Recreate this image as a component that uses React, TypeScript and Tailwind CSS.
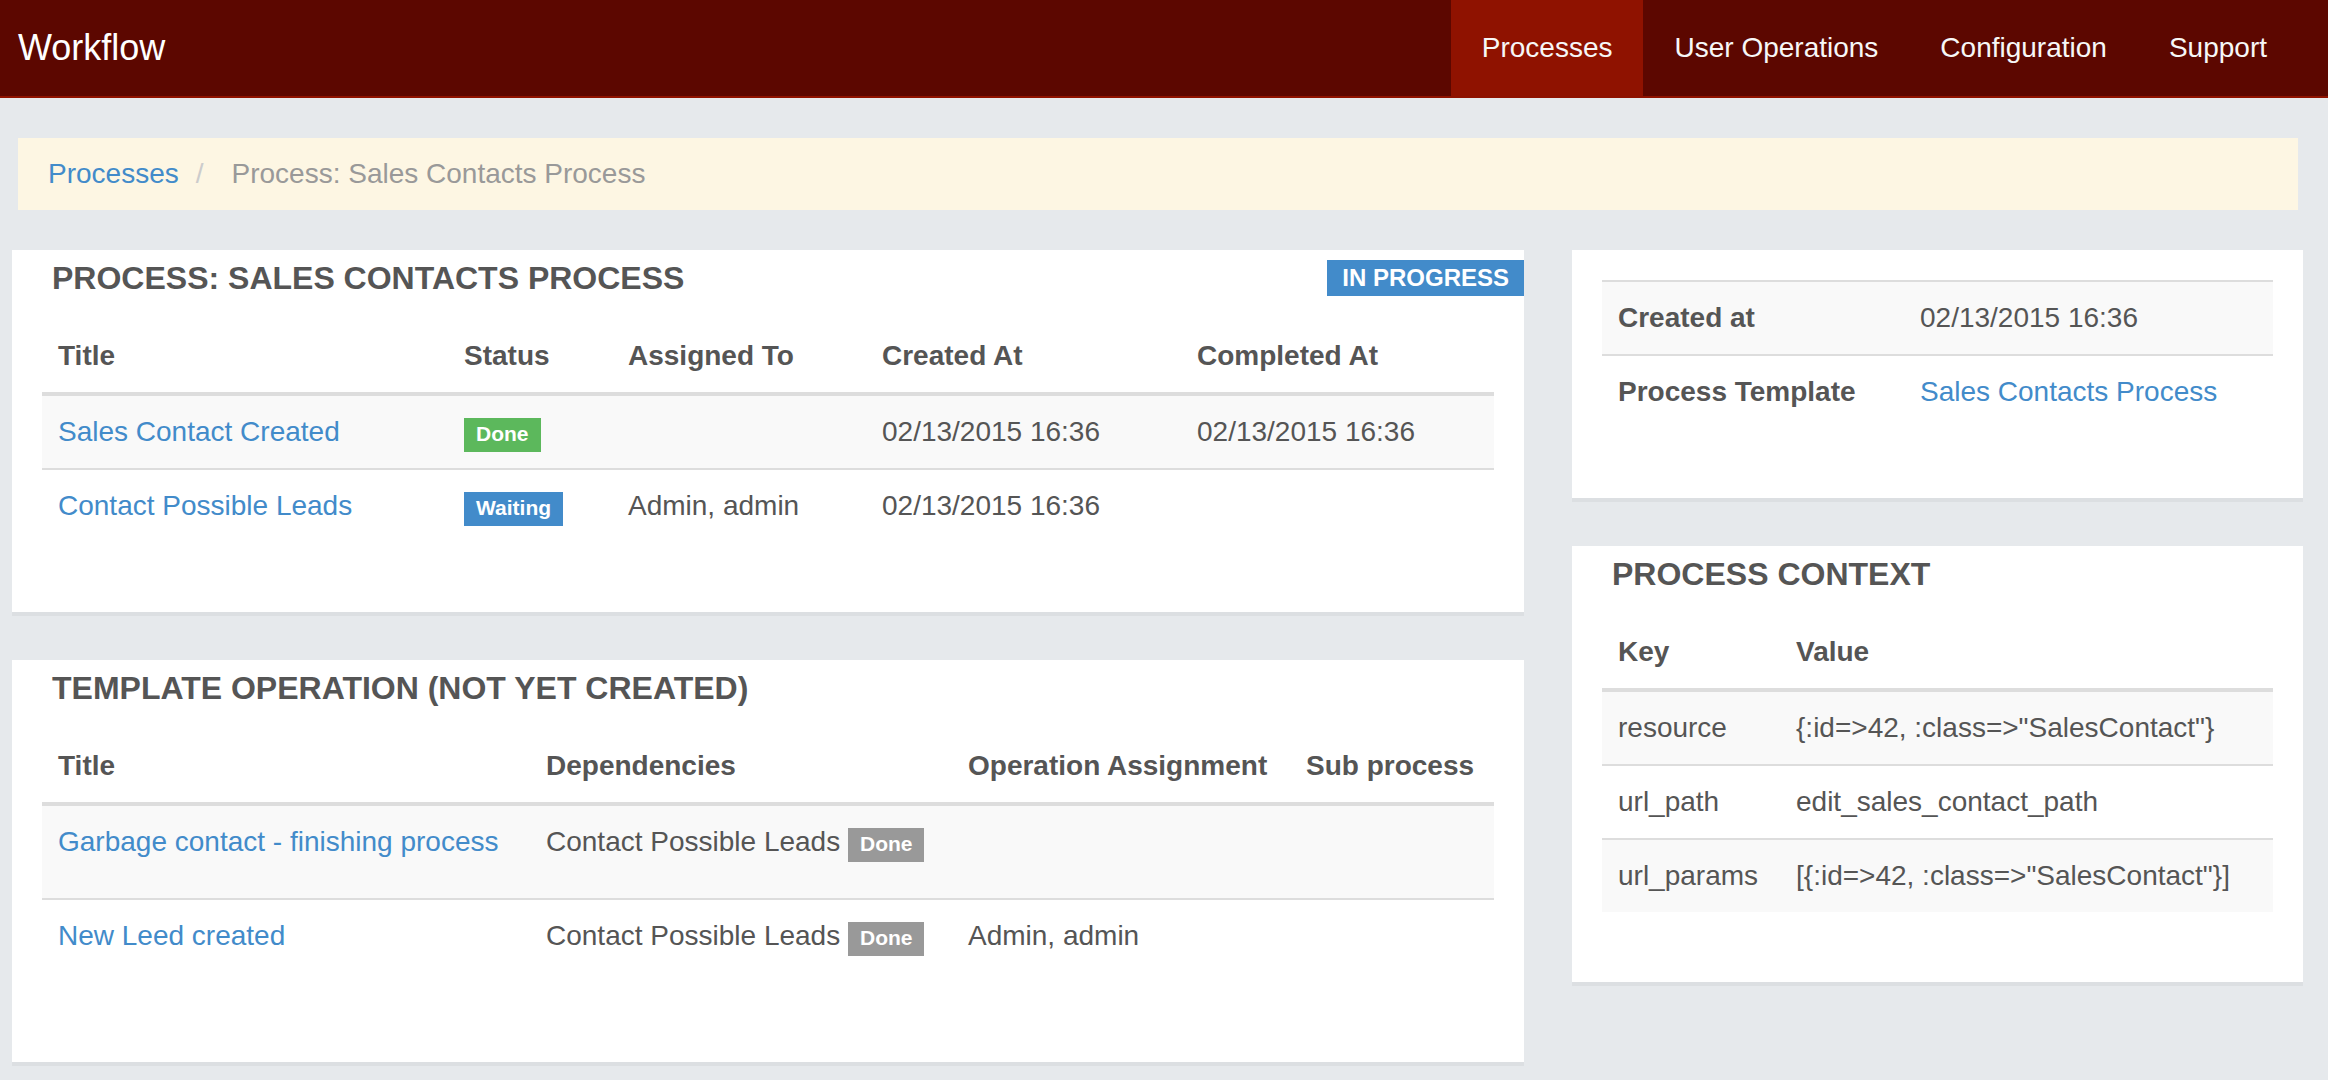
import type { ReactNode } from 'react'

const navItems = ['Processes', 'User Operations', 'Configuration', 'Support']

function Label({ color, children }: { color: string; children: ReactNode }) {
  return (
    <span
      className={`inline-block align-baseline px-[12px] pt-[4px] pb-[6px] text-[21px] leading-[24px] font-bold text-white ${color}`}
    >
      {children}
    </span>
  )
}

function Panel({ title, badge, children }: { title?: string; badge?: string; children: ReactNode }) {
  return (
    <div className={`bg-white border-b-4 border-[#dcdfe2] px-[30px] pb-[70px] mb-[44px] ${title ? 'pt-[10px]' : 'pt-[30px]'}`}>
      {title && (
        <div className="flex justify-between items-start h-[36px] mb-[24px]">
          <h3 className="pl-[10px] text-[32px] leading-[36px] font-bold uppercase text-[#555]">{title}</h3>
          {badge && (
            <span className="-mr-[30px] h-[36px] px-[15px] flex items-center bg-[#428bca] text-white text-[24px] font-bold">
              {badge}
            </span>
          )}
        </div>
      )}
      {children}
    </div>
  )
}

const th = 'text-left font-bold px-[16px] py-[16px] leading-[40px] border-b-4 border-[#ddd] align-bottom'
const td = 'px-[16px] py-[16px] leading-[40px] align-top'
const link = 'text-[#428bca]'

export default function App() {
  return (
    <div className="min-h-screen bg-[#e6e9ec] font-['Liberation_Sans',Arial,sans-serif] text-[28px] text-[#555]">
      {/* navbar */}
      <nav className="h-[98px] bg-[#5c0700] border-b-2 border-[#8f1200] flex items-stretch justify-between">
        <div className="pl-[18px] flex items-center text-[36px] text-white">Workflow</div>
        <ul className="flex pr-[30px]">
          {navItems.map((item, i) => (
            <li
              key={item}
              className={`px-[31px] flex items-center text-[28px] text-[#f7f7f7] ${i === 0 ? 'bg-[#8f1200]' : ''}`}
            >
              {item}
            </li>
          ))}
        </ul>
      </nav>

      {/* breadcrumb */}
      <div className="pt-[40px] pl-[18px] pr-[30px]">
        <div className="h-[72px] bg-[#fdf6e3] px-[30px] flex items-center">
          <a className={link}>Processes</a>
          <span className="pl-[17px] pr-[28px] text-[#ccc]">/</span>
          <span className="text-[#999]">Process: Sales Contacts Process</span>
        </div>
      </div>

      <div className="flex gap-[48px] pl-[12px] pt-[40px]">
        {/* left column */}
        <div className="w-[1512px] shrink-0">
          <Panel title="Process: Sales Contacts Process" badge="IN PROGRESS">
            <table className="w-full table-fixed border-separate border-spacing-0">
              <colgroup>
                <col className="w-[406px]" />
                <col className="w-[164px]" />
                <col className="w-[254px]" />
                <col className="w-[315px]" />
                <col className="w-[313px]" />
              </colgroup>
              <thead>
                <tr>
                  <th className={th}>Title</th>
                  <th className={th}>Status</th>
                  <th className={th}>Assigned To</th>
                  <th className={th}>Created At</th>
                  <th className={th}>Completed At</th>
                </tr>
              </thead>
              <tbody>
                <tr className="bg-[#f9f9f9]">
                  <td className={td}><a className={link}>Sales Contact Created</a></td>
                  <td className={td}><Label color="bg-[#5cb85c]">Done</Label></td>
                  <td className={td}></td>
                  <td className={td}>02/13/2015 16:36</td>
                  <td className={td}>02/13/2015 16:36</td>
                </tr>
                <tr>
                  <td className={`${td} border-t-2 border-[#ddd]`}><a className={link}>Contact Possible Leads</a></td>
                  <td className={`${td} border-t-2 border-[#ddd]`}><Label color="bg-[#428bca]">Waiting</Label></td>
                  <td className={`${td} border-t-2 border-[#ddd]`}>Admin, admin</td>
                  <td className={`${td} border-t-2 border-[#ddd]`}>02/13/2015 16:36</td>
                  <td className={`${td} border-t-2 border-[#ddd]`}></td>
                </tr>
              </tbody>
            </table>
          </Panel>

          <Panel title="Template Operation (not yet created)">
            <table className="w-full table-fixed border-separate border-spacing-0">
              <colgroup>
                <col className="w-[488px]" />
                <col className="w-[422px]" />
                <col className="w-[338px]" />
                <col className="w-[204px]" />
              </colgroup>
              <thead>
                <tr>
                  <th className={th}>Title</th>
                  <th className={th}>Dependencies</th>
                  <th className={th}>Operation Assignment</th>
                  <th className={th}>Sub process</th>
                </tr>
              </thead>
              <tbody>
                <tr className="bg-[#f9f9f9]">
                  <td className={td}><a className={link}>Garbage contact - finishing process</a></td>
                  <td className={td}>
                    <ul className="mb-[20px] whitespace-nowrap">
                      <li>Contact Possible Leads <Label color="bg-[#999]">Done</Label></li>
                    </ul>
                  </td>
                  <td className={td}></td>
                  <td className={td}></td>
                </tr>
                <tr>
                  <td className={`${td} border-t-2 border-[#ddd]`}><a className={link}>New Leed created</a></td>
                  <td className={`${td} border-t-2 border-[#ddd]`}>
                    <ul className="mb-[20px] whitespace-nowrap">
                      <li>Contact Possible Leads <Label color="bg-[#999]">Done</Label></li>
                    </ul>
                  </td>
                  <td className={`${td} border-t-2 border-[#ddd]`}>Admin, admin</td>
                  <td className={`${td} border-t-2 border-[#ddd]`}></td>
                </tr>
              </tbody>
            </table>
          </Panel>
        </div>

        {/* right column */}
        <div className="w-[731px] shrink-0">
          <Panel>
            <table className="w-full table-fixed border-separate border-spacing-0">
              <colgroup>
                <col className="w-[302px]" />
                <col />
              </colgroup>
              <tbody>
                <tr className="bg-[#f9f9f9]">
                  <th className="text-left font-bold px-[16px] py-[16px] leading-[40px] border-t-2 border-[#ddd]">Created at</th>
                  <td className={`${td} border-t-2 border-[#ddd]`}>02/13/2015 16:36</td>
                </tr>
                <tr>
                  <th className="text-left font-bold px-[16px] py-[16px] leading-[40px] border-t-2 border-[#ddd]">Process Template</th>
                  <td className={`${td} border-t-2 border-[#ddd]`}><a className={link}>Sales Contacts Process</a></td>
                </tr>
              </tbody>
            </table>
          </Panel>

          <Panel title="Process Context">
            <table className="w-full table-fixed border-separate border-spacing-0">
              <colgroup>
                <col className="w-[178px]" />
                <col />
              </colgroup>
              <thead>
                <tr>
                  <th className={th}>Key</th>
                  <th className={th}>Value</th>
                </tr>
              </thead>
              <tbody>
                <tr className="bg-[#f9f9f9]">
                  <td className={td}>resource</td>
                  <td className={`${td} whitespace-nowrap`}>{'{:id=>42, :class=>"SalesContact"}'}</td>
                </tr>
                <tr>
                  <td className={`${td} border-t-2 border-[#ddd]`}>url_path</td>
                  <td className={`${td} border-t-2 border-[#ddd]`}>edit_sales_contact_path</td>
                </tr>
                <tr className="bg-[#f9f9f9]">
                  <td className={`${td} border-t-2 border-[#ddd]`}>url_params</td>
                  <td className={`${td} border-t-2 border-[#ddd] whitespace-nowrap`}>{'[{:id=>42, :class=>"SalesContact"}]'}</td>
                </tr>
              </tbody>
            </table>
          </Panel>
        </div>
      </div>
    </div>
  )
}
